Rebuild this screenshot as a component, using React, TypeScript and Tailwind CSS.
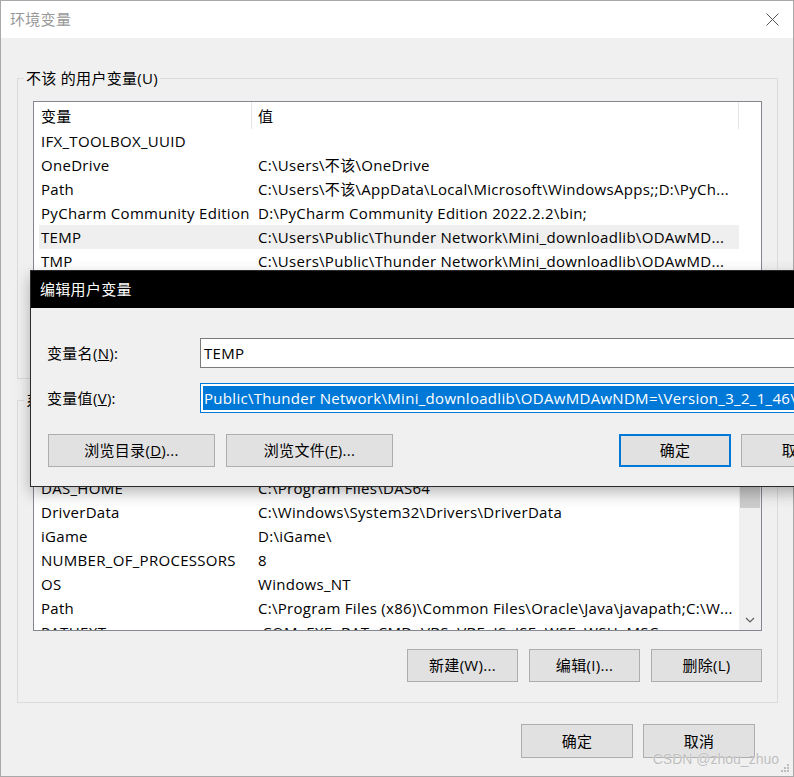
import React from 'react';

type Item = { name: string; value: string };

const userVars: Item[] = [
  { name: 'IFX_TOOLBOX_UUID', value: '' },
  { name: 'OneDrive', value: 'C:\\Users\\不该\\OneDrive' },
  { name: 'Path', value: 'C:\\Users\\不该\\AppData\\Local\\Microsoft\\WindowsApps;;D:\\PyCh...' },
  { name: 'PyCharm Community Edition', value: 'D:\\PyCharm Community Edition 2022.2.2\\bin;' },
  { name: 'TEMP', value: 'C:\\Users\\Public\\Thunder Network\\Mini_downloadlib\\ODAwMD...' },
  { name: 'TMP', value: 'C:\\Users\\Public\\Thunder Network\\Mini_downloadlib\\ODAwMD...' },
];

const systemVars: Item[] = [
  { name: 'ComSpec', value: 'C:\\Windows\\system32\\cmd.exe' },
  { name: 'DAS_HOME', value: 'C:\\Program Files\\DAS64' },
  { name: 'DriverData', value: 'C:\\Windows\\System32\\Drivers\\DriverData' },
  { name: 'iGame', value: 'D:\\iGame\\' },
  { name: 'NUMBER_OF_PROCESSORS', value: '8' },
  { name: 'OS', value: 'Windows_NT' },
  { name: 'Path', value: 'C:\\Program Files (x86)\\Common Files\\Oracle\\Java\\javapath;C:\\W...' },
  { name: 'PATHEXT', value: '.COM;.EXE;.BAT;.CMD;.VBS;.VBE;.JS;.JSE;.WSF;.WSH;.MSC' },
];

function Row({ item, active }: { item: Item; active?: boolean }) {
  return (
    <div
      className={`ml-[5px] flex h-[24px] w-[700px] shrink-0 items-center whitespace-nowrap ${
        active ? 'bg-[#efefef]' : ''
      }`}
    >
      <div className="w-[212px] shrink-0 overflow-hidden pl-[2px]">{item.name}</div>
      <div className="min-w-0 flex-1 overflow-hidden pl-[7px]">{item.value}</div>
    </div>
  );
}

function Chevron({ up }: { up?: boolean }) {
  return (
    <svg width="10" height="6" viewBox="0 0 10 6" fill="none">
      <path d={up ? 'M1 5 L5 1 L9 5' : 'M1 1 L5 5 L9 1'} stroke="#606060" strokeWidth="1.2" />
    </svg>
  );
}

function VarList({ rows, active, scroll, className }: { rows: Item[]; active?: number; scroll?: boolean; className: string }) {
  return (
    <div className={`mx-[15px] flex overflow-hidden border border-[#828790] bg-white ${className}`}>
      <div className="flex w-[705px] shrink-0 flex-col">
        <div className="flex h-[27px] shrink-0">
          <div className="flex w-[218px] items-center border-r border-[#e5e5e5] pl-[7px] pt-[2px]">变量</div>
          <div className="flex w-[487px] items-center border-r border-[#e5e5e5] pl-[6px] pt-[2px]">值</div>
        </div>
        {rows.map((r, i) => (
          <Row key={r.name + i} item={r} active={i === active} />
        ))}
      </div>
      {scroll && (
        <div className="flex flex-1 flex-col bg-[#f0f0f0]">
          <div className="flex h-[21px] shrink-0 items-center justify-center">
            <Chevron up />
          </div>
          <div className="mx-[1px] h-[62px] shrink-0 bg-[#cdcdcd]" />
          <div className="flex-1" />
          <div className="flex h-[21px] shrink-0 items-center justify-center">
            <Chevron />
          </div>
        </div>
      )}
    </div>
  );
}

function Btn({
  children,
  className = '',
  border = 'border border-[#adadad]',
}: {
  children: React.ReactNode;
  className?: string;
  border?: string;
}) {
  return (
    <div className={`flex h-[33px] shrink-0 items-center justify-center bg-[#e1e1e1] ${border} ${className}`}>
      {children}
    </div>
  );
}

function EditDialog() {
  return (
    <div className="absolute left-[30px] top-[270px] w-[820px] border border-[#2a2a2a] bg-[#f0f0f0] shadow-[0_6px_14px_rgba(0,0,0,0.28)]">
      <div className="flex h-[37px] items-center bg-black pl-[9px] text-white">编辑用户变量</div>
      <div className="flex flex-col pb-[19px] pt-[30px]">
        <div className="flex h-[30px] items-center">
          <div className="w-[169px] shrink-0 pl-[16px]">
            变量名(<span className="underline">N</span>):
          </div>
          <div className="flex h-full flex-1 items-center border border-[#7a7a7a] bg-white pl-[3px]">TEMP</div>
        </div>
        <div className="mt-[15px] flex h-[30px] items-center">
          <div className="w-[169px] shrink-0 pl-[16px]">
            变量值(<span className="underline">V</span>):
          </div>
          <div className="flex h-full min-w-0 flex-1 items-stretch overflow-hidden border border-[#0078d7] bg-white p-[2px]">
            <span className="flex flex-1 items-center whitespace-nowrap bg-[#0078d7] pl-[1px] text-white">
              Public\Thunder Network\Mini_downloadlib\ODAwMDAwNDM=\Version_3_2_1_46\temp
            </span>
          </div>
        </div>
        <div className="mt-[21px] flex pl-[17px]">
          <Btn className="w-[167px]">
            浏览目录(<span className="underline">D</span>)...
          </Btn>
          <Btn className="ml-[11px] w-[167px]">
            浏览文件(<span className="underline">F</span>)...
          </Btn>
          <Btn className="ml-[226px] w-[112px]" border="border-2 border-[#0078d7]">
            确定
          </Btn>
          <Btn className="ml-[10px] w-[112px]">取消</Btn>
        </div>
      </div>
    </div>
  );
}

export default function App() {
  return (
    <div className="relative h-[777px] w-[794px] overflow-hidden bg-white font-['Open_Sans','Noto_Sans_CJK_SC',sans-serif] text-[15px] tracking-[0.3px] text-black">
      <div className="flex h-full w-full flex-col border border-[#a9a9a9]">
        {/* title bar */}
        <div className="flex h-[37px] shrink-0 items-center justify-between bg-white pl-[9px] pr-[14px] text-[#999]">
          <span>环境变量</span>
          <svg width="13" height="13" viewBox="0 0 13 13">
            <path d="M0.5 0.5 L12.5 12.5 M12.5 0.5 L0.5 12.5" stroke="#555" strokeWidth="1" />
          </svg>
        </div>

        <div className="flex flex-1 flex-col bg-[#f0f0f0]">
          <fieldset className="ml-[16px] mr-[15px] mt-[30px] border border-[#dcdcdc] pb-[20px]">
            <legend className="ml-[6px] px-[2px] leading-[20px]">不该 的用户变量(U)</legend>
            <VarList className="mt-[13px] h-[206px]" rows={userVars} active={4} />
            <div className="mr-[15px] mt-[18px] flex justify-end gap-[11px]">
              <Btn className="w-[111px]">新建(N)...</Btn>
              <Btn className="w-[111px]">编辑(E)...</Btn>
              <Btn className="w-[111px]">删除(D)</Btn>
            </div>
          </fieldset>

          <fieldset className="ml-[16px] mr-[15px] mt-[11px] border border-[#dcdcdc] pb-[20px]">
            <legend className="ml-[6px] px-[2px] leading-[20px]">系统变量(S)</legend>
            <VarList className="mt-[14px] h-[207px]" rows={systemVars} scroll />
            <div className="mr-[15px] mt-[18px] flex justify-end gap-[11px]">
              <Btn className="w-[111px]">新建(W)...</Btn>
              <Btn className="w-[111px]">编辑(I)...</Btn>
              <Btn className="w-[111px]">删除(L)</Btn>
            </div>
          </fieldset>

          <div className="mr-[38px] mt-[21px] flex justify-end gap-[10px]">
            <Btn className="h-[34px] w-[112px]">确定</Btn>
            <Btn className="h-[34px] w-[112px]">取消</Btn>
          </div>
        </div>
      </div>

      <EditDialog />

      {/* watermark */}
      <div className="absolute bottom-[7px] right-[15px] font-['Liberation_Sans',sans-serif] text-[14px] tracking-normal text-[#bdbdbd] [text-shadow:0_0_1px_#ffffff]">
        CSDN @zhou_zhuo
      </div>
      <svg className="absolute bottom-[4px] right-[4px]" width="9" height="9" viewBox="0 0 9 9" fill="#bdbdbd">
        <rect x="6" y="0" width="2" height="2" />
        <rect x="3" y="3" width="2" height="2" />
        <rect x="6" y="3" width="2" height="2" />
        <rect x="0" y="6" width="2" height="2" />
        <rect x="3" y="6" width="2" height="2" />
        <rect x="6" y="6" width="2" height="2" />
      </svg>
    </div>
  );
}
